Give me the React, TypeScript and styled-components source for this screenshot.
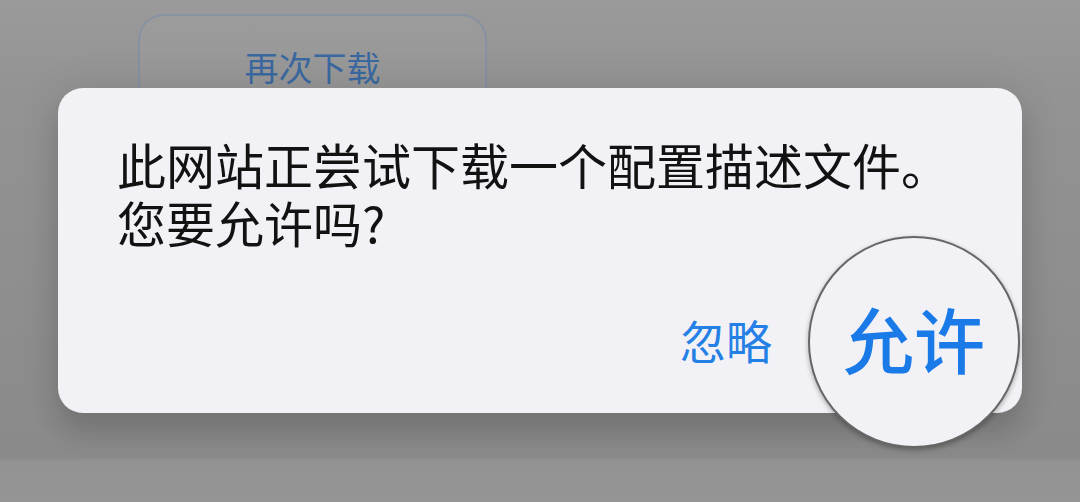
import React from 'react'
import styled, { createGlobalStyle } from 'styled-components'

const GlobalStyle = createGlobalStyle`
  html, body {
    margin: 0;
    padding: 0;
    background: #959595;
  }
  body {
    font-family: "Noto Sans CJK SC", "Noto Sans", sans-serif;
  }
`

function App(): JSX.Element {
  return (
    <Page>
      <GlobalStyle />

      {/* 页面上原有的按钮，被弹窗盖住一半 */}
      <RetryButton>再次下载</RetryButton>

      <Overlay>
        <AlertCard>
          <Message>
            <MessageLine>此网站正尝试下载一个配置描述文件。</MessageLine>
            <MessageLine>您要允许吗?</MessageLine>
          </Message>

          <Actions>
            <ActionButton>忽略</ActionButton>
            <Lens>
              <LensLabel>允许</LensLabel>
            </Lens>
          </Actions>
        </AlertCard>
      </Overlay>
    </Page>
  )
}

const Page = styled.div`
  position: relative;
  width: 1080px;
  height: 502px;
  overflow: hidden;
  background: linear-gradient(
    180deg,
    #9a9a9a 0%,
    #939393 18%,
    #8e8e8e 60%,
    #8a8a8a 91%,
    #939393 92%,
    #959595 100%
  );
`

const RetryButton = styled.div`
  box-sizing: border-box;
  width: 349px;
  height: 110px;
  margin: 14px 0 0 138px;
  padding-top: 29px;
  border: 2px solid rgba(118, 138, 168, 0.55);
  border-radius: 26px;
  background: rgba(255, 255, 255, 0.03);
  color: #3a68a0;
  font-size: 34px;
  line-height: 44px;
  text-align: center;
`

const Overlay = styled.div`
  position: absolute;
  inset: 0;
  padding: 88px 58px 0;
`

const AlertCard = styled.div`
  box-sizing: border-box;
  display: flex;
  flex-direction: column;
  width: 964px;
  height: 325px;
  padding: 47px 0 0 59px;
  border-radius: 25px;
  background: #f2f2f6;
  box-shadow: 0 22px 26px rgba(0, 0, 0, 0.12), 0 0 40px rgba(0, 0, 0, 0.1);
`

const Message = styled.div`
  display: flex;
  flex-direction: column;
  color: #121212;
  font-size: 49px;
`

const MessageLine = styled.span`
  display: block;
  height: 58px;
  line-height: 58px;
  overflow: visible;
`

const Actions = styled.div`
  display: flex;
  align-items: center;
  justify-content: flex-end;
  gap: 36px;
  margin-top: -15px;
  padding-right: 2px;
`

const ActionButton = styled.span`
  color: #2580e6;
  font-size: 46px;
  line-height: 56px;
  margin-top: -6px;
`

const Lens = styled.div`
  box-sizing: border-box;
  display: flex;
  align-items: center;
  justify-content: center;
  flex-shrink: 0;
  width: 212px;
  height: 212px;
  padding-bottom: 10px;
  border: 2px solid #666;
  border-radius: 50%;
  background: #f2f2f6;
  box-shadow: 0 2px 5px rgba(0, 0, 0, 0.3);
`

const LensLabel = styled.span`
  color: #1a7be8;
  font-size: 71px;
  font-weight: 500;
  line-height: 80px;
`

export default App
